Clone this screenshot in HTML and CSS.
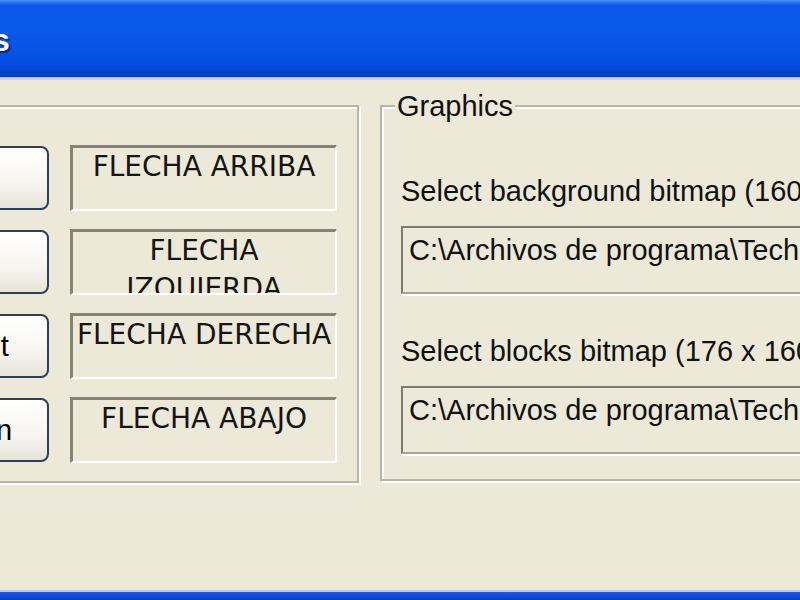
FILE: index.html
```html
<!DOCTYPE html>
<html lang="en">
<head>
    <meta charset="UTF-8">
    <title>Options</title>
    <link rel="stylesheet" href="styles.css">
</head>
<body>
    <div class="window">
        <div class="titlebar">
            <span class="title">Options</span>
        </div>

        <div class="dialog">
            <fieldset class="group keys">
                <legend>Keys</legend>
                <div class="keys-body">
                    <div class="key-row">
                        <button class="btn">Up</button>
                        <div class="key-label">FLECHA ARRIBA</div>
                    </div>
                    <div class="key-row">
                        <button class="btn">Left</button>
                        <div class="key-label">FLECHA IZQUIERDA</div>
                    </div>
                    <div class="key-row">
                        <button class="btn">Right</button>
                        <div class="key-label">FLECHA DERECHA</div>
                    </div>
                    <div class="key-row">
                        <button class="btn">Down</button>
                        <div class="key-label">FLECHA ABAJO</div>
                    </div>
                </div>
            </fieldset>

            <fieldset class="group graphics">
                <legend>Graphics</legend>
                <div class="graphics-body">
                    <label class="field-label">Select background bitmap (160 x 160)</label>
                    <div class="path-box">C:\Archivos de programa\Tech Tetris\fondo.bmp</div>
                    <label class="field-label second">Select blocks bitmap (176 x 160)</label>
                    <div class="path-box">C:\Archivos de programa\Tech Tetris\bloques.bmp</div>
                </div>
            </fieldset>
        </div>

        <div class="frame-bottom"></div>
    </div>
</body>
</html>
```

FILE: styles.css
```css
body {
    margin: 0;
    overflow: hidden;
    background-color: #ece9d8;
    font-family: "Liberation Sans", Arial, sans-serif;
    color: #111;
}

/* the window is wider than the view, its left side is cut off */
.window {
    margin-left: -160px;
    width: 1200px;
    height: 600px;
    display: flex;
    flex-direction: column;
}

.titlebar {
    height: 77px;
    display: flex;
    align-items: center;
    padding-left: 49px;
    background: linear-gradient(to bottom, #4a8ef5 0, #0a5ae8 5px, #0858ea 40%, #0652e2 78%, #0446d6 90%, #0038b8 100%);
    border-bottom: 3px solid #c6d7f5;
}

.title {
    font-size: 32px;
    font-weight: bold;
    color: #fff;
    text-shadow: 2px 2px 1px #0a2a8a;
    margin-top: 3px;
}

.dialog {
    flex: 1;
    display: flex;
    align-items: flex-start;
    gap: 21px;
    padding: 9.5px 0 0 12px;
}

.group {
    margin: 0;
    padding: 0;
    border: 2px solid #b8b5a7;
    box-shadow: inset 2px 2px 0 #fff, 2px 2px 0 #fff;
}

    .group legend {
        font-size: 29px;
        line-height: 33px;
        margin-left: 13px;
        padding: 0 2px;
        background-color: #ece9d8;
    }

.keys-body {
    display: flex;
    flex-direction: column;
    gap: 18px;
    padding: 22.5px 20px 18px 47px;
}

.key-row {
    display: flex;
    align-items: center;
    gap: 21px;
    height: 66px;
}

.btn {
    width: 148px;
    height: 64px;
    padding: 0;
    font-family: "Liberation Sans", Arial, sans-serif;
    font-size: 29px;
    color: #000;
    border: 2px solid #2c3f5e;
    border-radius: 8px;
    background: linear-gradient(to bottom, #ffffff 0, #f6f5f0 60%, #e6e3d8 100%);
}

.key-label {
    width: 267px;
    height: 66px;
    box-sizing: border-box;
    border-style: solid;
    border-width: 3px 2px 2px 3px;
    border-color: #858378 #fff #fff #858378;
    font-family: "DejaVu Sans", sans-serif;
    font-size: 28px;
    line-height: 38px;
    text-align: center;
    overflow: hidden;
    color: #151515;
}

.graphics {
    width: 520px;
}

.graphics-body {
    padding: 52px 0 25px 19px;
}

.field-label {
    display: block;
    font-size: 29px;
    line-height: 33px;
    white-space: nowrap;
}

    .field-label.second {
        margin-top: 40.5px;
    }

.path-box {
    height: 68px;
    box-sizing: border-box;
    margin-top: 18.5px;
    padding: 6px 6px;
    font-size: 29px;
    line-height: 33px;
    white-space: nowrap;
    overflow: hidden;
    border: 2px solid;
    border-color: #7c7a72 #a9a79c #a9a79c #7c7a72;
    box-shadow: 0 2px 0 #fff;
}

.frame-bottom {
    height: 8px;
    border-top: 2px solid #b4ccf6;
    background: linear-gradient(to bottom, #1c5ae6, #0a3ec8);
}
```
